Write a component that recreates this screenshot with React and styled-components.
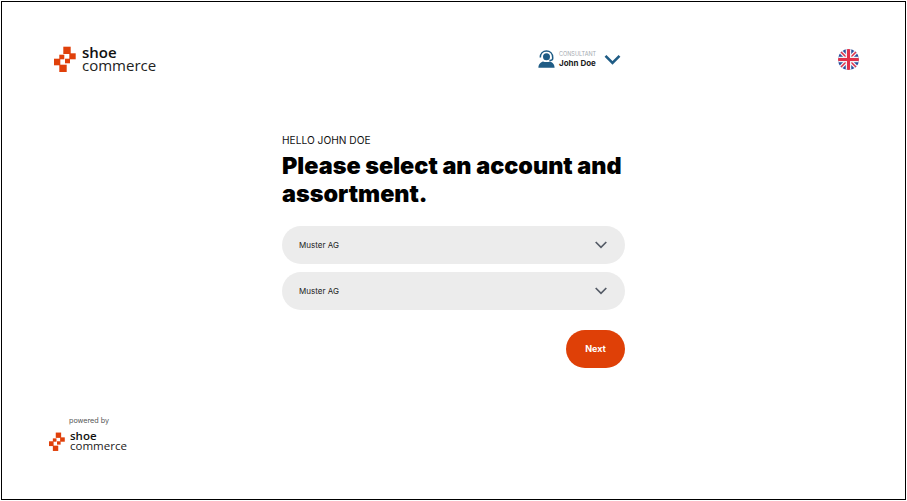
import React from "react";
import styled, { createGlobalStyle } from "styled-components";

const GlobalStyle = createGlobalStyle`
  html, body { margin: 0; padding: 0; background: #fff; }
  body { font-family: "Inter", "Liberation Sans", sans-serif; color: #000; }
`;

function LogoMark({ small }) {
  return (
    <svg width={small ? 16 : 22} height={small ? 19 : 26} viewBox="0 0 22 26" fill="#e0400a">
      <rect x="9.300" y="0.700" width="7.400" height="7.300" />
      <rect x="15.300" y="7.300" width="6.400" height="6" />
      <rect x="5.300" y="8.700" width="5" height="4.600" />
      <rect x="11" y="12.700" width="5" height="4.600" />
      <rect x="0" y="12.700" width="6.300" height="6.600" />
      <rect x="5.300" y="18.700" width="7.400" height="7.300" />
    </svg>
  );
}

function Logo({ small }) {
  return (
    <LogoWrap small={small}>
      <LogoMark small={small} />
      <LogoText small={small}>
        <b>shoe</b>
        <span>commerce</span>
      </LogoText>
    </LogoWrap>
  );
}

function Select({ value }) {
  return (
    <SelectBox>
      <SelectText>{value}</SelectText>
      <svg width="12" height="8" viewBox="0 0 12 8" fill="none" stroke="#545b66" strokeWidth="1.700">
        <path d="M.7 1l5.300 5.300L11.300 1" />
      </svg>
    </SelectBox>
  );
}

export default function App() {
  return (
    <Frame>
      <GlobalStyle />
      <Header>
        <Logo />
        <Consultant>
          <svg width="17" height="18" viewBox="0 0 17 18" fill="#1f5c85">
            <path d="M8.500 3.200a3.500 3.500 0 1 1 0 7 3.500 3.500 0 0 1 0-7z" />
            <path d="M2.300 7.500C2.300 3.500 5 .9 8.500.9s6.200 2.600 6.200 6.600v1c0 1.200-1.200 2-3.300 2.100" fill="none" stroke="#1f5c85" strokeWidth="1.500" />
            <path d="M.4 17.800c0-3.800 2.600-6 4.600-6.400 1.800.7 5.200.7 7 0 2 .4 4.600 2.600 4.600 6.400z" />
          </svg>
          <ConsultantText>
            <small>CONSULTANT</small>
            <b>John Doe</b>
          </ConsultantText>
          <svg width="17" height="11" viewBox="0 0 17 11" fill="none" stroke="#1f5c85" strokeWidth="2.600">
            <path d="M1.500 1.800l7 7 7-7" />
          </svg>
        </Consultant>
        <Flag>
          <svg width="21" height="21" viewBox="0 0 21 21">
            <defs>
              <clipPath id="flagClip">
                <circle cx="10.500" cy="10.500" r="10.500" />
              </clipPath>
            </defs>
            <g clipPath="url(#flagClip)">
              <rect width="21" height="21" fill="#2a4f9e" />
              <path d="M0 0l21 21M21 0L0 21" stroke="#f2f2f6" strokeWidth="4" />
              <path d="M0 0l21 21M21 0L0 21" stroke="#e0304a" strokeWidth="1.500" />
              <path d="M10.500 0v21M0 10.500h21" stroke="#f2f2f6" strokeWidth="5.500" />
              <path d="M10.500 0v21M0 10.500h21" stroke="#e0304a" strokeWidth="3" />
            </g>
          </svg>
        </Flag>
      </Header>
      <Main>
        <Hello>HELLO JOHN DOE</Hello>
        <Title>Please select an account and assortment.</Title>
        <Selects>
          <Select value="Muster AG" />
          <Select value="Muster AG" />
        </Selects>
        <NextButton>Next</NextButton>
      </Main>
      <Footer>
        <Powered>powered by</Powered>
        <Logo small />
      </Footer>
    </Frame>
  );
}

const Frame = styled.div`
  box-sizing: border-box;
  width: 905px;
  height: 499px;
  margin: 1px 0 0 1px;
  border: 1px solid #000;
  box-shadow: 0 1px 0 #c8c8c8;
  display: flex;
  flex-direction: column;
  overflow: hidden;
`;

const Header = styled.header`
  display: grid;
  grid-template-columns: 484px 300px 21px;
  align-items: center;
  height: 28px;
  padding: 43px 0 0 52px;
`;

const LogoWrap = styled.div`
  display: flex;
  align-items: center;
  gap: ${(p) => (p.small ? "5px" : "6px")};
`;

const LogoText = styled.div`
  display: flex;
  flex-direction: column;
  font-family: "Open Sans", sans-serif;
  font-size: ${(p) => (p.small ? "11.500px" : "15px")};
  line-height: ${(p) => (p.small ? "10px" : "13px")};
  color: #222;

  b {
    font-weight: 600;
    color: #111;
  }
`;

const Consultant = styled.div`
  display: flex;
  align-items: center;
`;

const ConsultantText = styled.div`
  display: flex;
  flex-direction: column;
  margin: 0 7px 0 4px;
  width: 38px;
  white-space: nowrap;

  small {
    font-size: 5.500px;
    line-height: 8px;
    color: #a4a9b0;
  }

  b {
    font-size: 8px;
    line-height: 10px;
    font-weight: 700;
    color: #1c1c1c;
  }
`;

const Flag = styled.div`
  display: flex;
`;

const Main = styled.main`
  width: 343px;
  margin: 60px 0 0 280px;
  display: flex;
  flex-direction: column;
`;

const Hello = styled.div`
  font-size: 10.200px;
  line-height: 14px;
  color: #111;
`;

const Title = styled.h1`
  margin: 5px 0 0;
  font-size: 23.400px;
  line-height: 28px;
  font-weight: 900;
  color: #000;
`;

const Selects = styled.div`
  display: flex;
  flex-direction: column;
  gap: 8px;
  margin-top: 18px;
`;

const SelectBox = styled.div`
  height: 38px;
  border-radius: 19px;
  background: #ececec;
  display: flex;
  align-items: center;
  justify-content: space-between;
  padding: 0 18px 0 17px;
`;

const SelectText = styled.span`
  font-size: 8px;
  color: #222;
`;

const NextButton = styled.button`
  align-self: flex-end;
  width: 59px;
  height: 38px;
  margin-top: 20px;
  padding: 0 0 2px;
  border: 0;
  border-radius: 19px;
  background: #df4007;
  color: #fff;
  font-family: inherit;
  font-size: 9px;
  font-weight: 700;
`;

const Footer = styled.footer`
  margin: auto 0 48px 47px;
  display: flex;
  flex-direction: column;
  align-items: flex-start;
`;

const Powered = styled.div`
  margin: 0 0 5px 20px;
  font-size: 7.200px;
  line-height: 10px;
  color: #555;
`;
